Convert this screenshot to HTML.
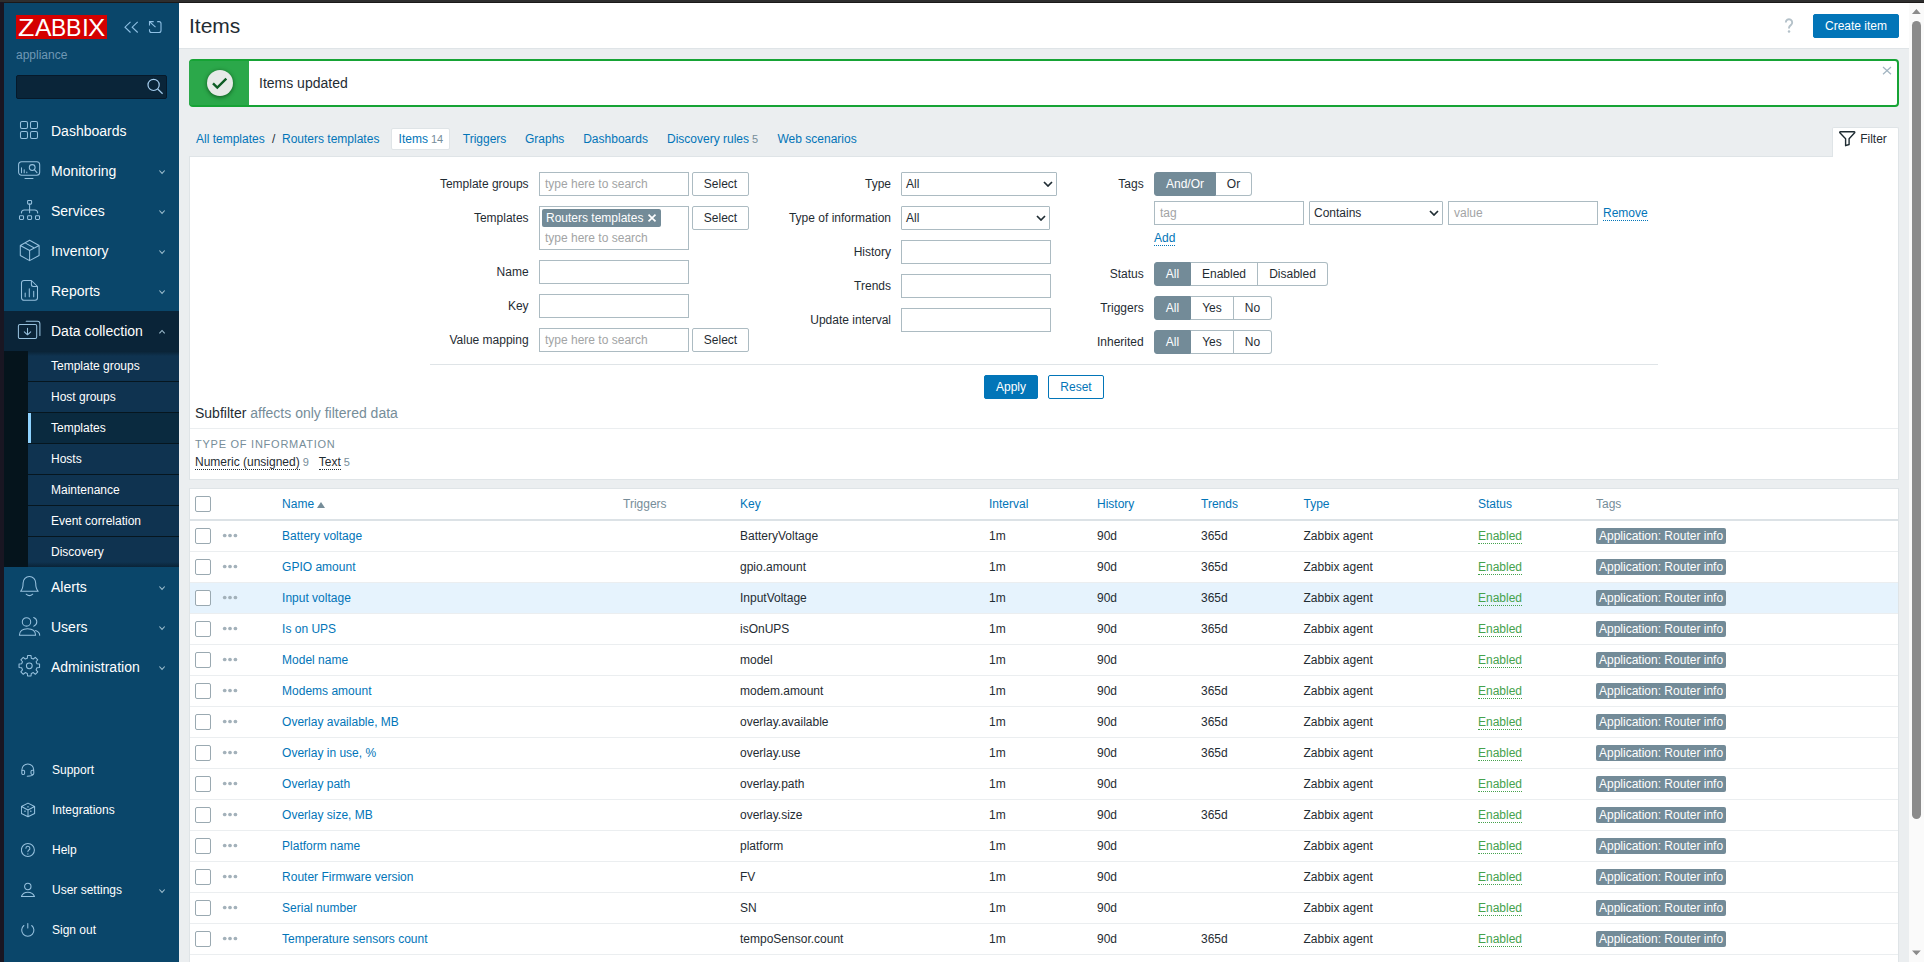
<!DOCTYPE html>
<html lang="en">
<head>
<meta charset="utf-8">
<title>Configuration of items</title>
<style>
*{box-sizing:border-box}
html,body{margin:0;padding:0}
body{width:1924px;height:962px;overflow:hidden;position:relative;background:#191622;font-family:"Liberation Sans",sans-serif;font-size:12px;line-height:17px;color:#1f2c33}
a{color:#0275b8;text-decoration:none}
#topbar{position:absolute;left:0;top:0;width:1924px;height:3px;background:#2e2e2e;border-bottom:1px solid #1b1919}
#leftbar{position:absolute;left:0;top:2px;width:4px;height:960px;background:#191622}
#vp{position:absolute;left:4px;top:3px;width:1920px;height:959px;overflow:hidden;background:#ebeef0}
.abs{position:absolute}
/* sidebar */
#side{position:absolute;left:0;top:0;width:175px;height:959px;background:#0a466a;color:#fff}
#logo{position:absolute;left:12px;top:12px;width:91px;height:24px;background:#d40000;color:#fff;font-size:24.800px;line-height:25.200px;overflow:hidden;white-space:nowrap}
#side .appl{position:absolute;left:12px;top:43.600px;font-size:12px;color:#6f98b5}
#search{position:absolute;left:12px;top:72px;width:151px;height:24px;background:#0a2539;border:1px solid #06192a;border-radius:2px}
.mm{position:absolute;left:0;width:175px;height:40px;font-size:14px;line-height:40px;color:#fff}
.mm span.t{position:absolute;left:47px;top:0}
.mm svg.ic{position:absolute;left:13px;top:8px}
.mm svg.ar{position:absolute;left:154px;top:18px}
.sm{position:absolute;left:24px;width:151px;height:31px;background:#0f3350;border-bottom:1px solid #06161f;font-size:12px;line-height:30px;color:#fff;padding-left:23px}
.um{position:absolute;left:0;width:175px;height:40px;font-size:12px;line-height:40px;color:#fff}
.um span.t{position:absolute;left:48px;top:0}
.um svg.ic{position:absolute;left:17px;top:12px}
/* main */
#hdr{position:absolute;left:175px;top:0;width:1730px;height:46px;background:#fff;border-bottom:1px solid #dfe4e7}
#hdr h1{position:absolute;left:10px;top:9px;margin:0;font-size:21px;line-height:28px;font-weight:normal;color:#1f2c33}
.btn{position:absolute;background:#0275b8;border:1px solid #0275b8;color:#fff;border-radius:2px;font-size:12px;text-align:center;height:24px;line-height:22px}
.btn-alt{background:#fff;color:#0275b8}
.btn-grey{background:#fff;color:#1f2c33;border:1px solid #acbbc2}
/* message */
#msg{position:absolute;left:185px;top:56px;width:1710px;height:48px;background:#fff;border:2px solid #16a335;border-radius:4px}
#msg .g{position:absolute;left:-2px;top:0;width:60px;height:44px;background:#2ba84a;border-radius:2px 0 0 2px}
#msg .c{position:absolute;left:18px;top:9px;width:26px;height:26px;border-radius:50%;background:#e7eae8;box-shadow:0 1px 4px rgba(0,50,10,.7)}
#msg .txt{position:absolute;left:68px;top:13px;font-size:14px;line-height:18px}
/* nav */
#nav{position:absolute;left:185px;top:123px;height:26px;font-size:12px;line-height:26px;white-space:nowrap}
#nav span,#nav a{position:absolute;top:0}
#nav sup,.cnt{color:#768d99}
/* filter */
#ftab{position:absolute;left:1828px;top:124px;width:67px;height:30px;background:#fff;border:1px solid #dfe4e7;border-bottom:none;border-radius:2px 2px 0 0;z-index:2}
#filt{position:absolute;left:185px;top:153px;width:1710px;height:324px;background:#fff;border:1px solid #dfe4e7}
.lbl{position:absolute;text-align:right;white-space:nowrap;line-height:24px;height:24px}
.inp{position:absolute;height:24px;background:#fff;border:1px solid #acbbc2;line-height:22px;padding:0 5px;color:#a2a4a5;white-space:nowrap}
.sel{color:#1f2c33;border-radius:1px}
.rad{position:absolute;height:24px;border:1px solid #acbbc2;background:#fff;line-height:22px;text-align:center;color:#1f2c33}
.rad.on{background:#738b98;border-color:#738b98;color:#fff}
.dot{border-bottom:1px dotted #0275b8}
/* table */
#tbl{position:absolute;left:185px;top:485px;width:1710px;height:480px;background:#fff;border:1px solid #dfe4e7}
.row{position:absolute;left:0;width:1708px;height:31px;border-bottom:1px solid #ebeef0;line-height:30px}
.row.hov{background:#e6f3fd}
.row span,.row a{position:absolute;top:0;white-space:nowrap}
.cb{position:absolute;left:6px;width:16px;height:16px;border:1px solid #9aa9b1;border-radius:2px;background:#fff}
.tag{background:#738b98;color:#fff;border-radius:2px;height:16px;line-height:16px;padding:0 3px;top:7px !important}
.en{color:#45a24d}
.en i{font-style:normal;border-bottom:1px dotted #45a24d;display:inline-block;line-height:14px}
.th{color:#0275b8}
.thg{color:#768d99}
/* scrollbar */
#sb{position:absolute;left:1905px;top:0;width:15px;height:959px;background:#fafafa}
#sb .thumb{position:absolute;left:3px;top:18px;width:9px;height:798px;background:#8b8b8b;border-radius:5px}
</style>
</head>
<body>
<div id="topbar"></div>
<div id="leftbar"></div>
<div id="vp">
<!--SIDE-->
<div id="side">
<div id="logo"><span class="abs" style="left:2.0px;top:0;transform-origin:0 0;transform:scaleX(1.08)">Z</span><span class="abs" style="left:19.1px;top:0;transform-origin:0 0;transform:scaleX(1)">A</span><span class="abs" style="left:35.0px;top:0;transform-origin:0 0;transform:scaleX(0.92)">B</span><span class="abs" style="left:50.0px;top:0;transform-origin:0 0;transform:scaleX(0.93)">B</span><span class="abs" style="left:66.0px;top:0;transform-origin:0 0;transform:scaleX(1)">I</span><span class="abs" style="left:71.6px;top:0;transform-origin:0 0;transform:scaleX(1.04)">X</span></div>
<svg class="abs" style="left:116px;top:13px" width="48" height="24" viewBox="0 0 48 24" fill="none" stroke="#8fc0e4" stroke-width="1.1"><path d="M10.500 5.900L5 11.200L10.500 16.500M17.700 5.900L12.200 11.200L17.700 16.500"/><path d="M37.200 5.600H39a2 2 0 0 1 2 2V14.500a2 2 0 0 1-2 2H31.500a2 2 0 0 1-2-2V13.200M35.500 11.200L29.500 5.600M29.500 9.500V5.600H33.700"/></svg>
<div class="appl">appliance</div>
<div id="search"><svg class="abs" style="left:126px;top:0" width="24" height="22" viewBox="0 0 24 22" fill="none" stroke="#a5cdee" stroke-width="1.200"><circle cx="10.600" cy="8.900" r="5.600"/><path d="M14.700 13L19.600 17.700"/></svg></div>
<!--MENU-->
<div class="mm" style="top:108px"><svg class="ic" width="25" height="24" viewBox="0 0 25 24" stroke="#97c1de" stroke-width="1.05" fill="none" stroke-linecap="round" stroke-linejoin="round"><rect x="3.5" y="2.5" width="7" height="7" rx="1.5"/><rect x="13.5" y="2.5" width="7" height="7" rx="1.5"/><rect x="3.5" y="12.5" width="7" height="7" rx="1.5"/><rect x="13.5" y="12.5" width="7" height="7" rx="1.5"/></svg><span class="t">Dashboards</span></div>
<div class="mm" style="top:148px"><svg class="ic" width="25" height="24" viewBox="0 0 25 24" stroke="#97c1de" stroke-width="1.05" fill="none" stroke-linecap="round" stroke-linejoin="round"><rect x="1.600" y="2.800" width="21.100" height="13.500" rx="3"/><path d="M8 19.500h8M4.500 8.700v5M7.200 10.700v3M9.800 12.900v.8"/><circle cx="15.200" cy="8.500" r="2.900"/><path d="M17.300 10.600l2.700 3"/></svg><span class="t">Monitoring</span><svg class="ar" width="8" height="6" viewBox="0 0 8 6"><path d="M1.400 1.500L4.050 4.400L6.700 1.500" stroke="#9dbccd" stroke-width="1.1" fill="none"/></svg></div>
<div class="mm" style="top:188px"><svg class="ic" width="25" height="24" viewBox="0 0 25 24" stroke="#97c1de" stroke-width="1.05" fill="none" stroke-linecap="round" stroke-linejoin="round"><rect x="10.600" y="1.400" width="4" height="3.700" rx=".8"/><rect x="2.500" y="16.700" width="4" height="3.700" rx=".8"/><rect x="10.600" y="16.700" width="4" height="3.700" rx=".8"/><rect x="18.500" y="16.700" width="4" height="3.700" rx=".8"/><path d="M12.600 5.100v8.600M4.400 14a3 3 0 0 1 3-3H17.700a3 3 0 0 1 3 3"/></svg><span class="t">Services</span><svg class="ar" width="8" height="6" viewBox="0 0 8 6"><path d="M1.400 1.500L4.050 4.400L6.700 1.500" stroke="#9dbccd" stroke-width="1.1" fill="none"/></svg></div>
<div class="mm" style="top:228px"><svg class="ic" width="25" height="24" viewBox="0 0 25 24" stroke="#97c1de" stroke-width="1.05" fill="none" stroke-linecap="round" stroke-linejoin="round"><path d="M12.600 1.300L22.100 6.500V16.500L12.600 21.600L3.300 16.500V6.500zM3.300 6.500L12.600 11.500L22.100 6.500M12.600 11.500V21.600M8 3.900L17.350 9"/></svg><span class="t">Inventory</span><svg class="ar" width="8" height="6" viewBox="0 0 8 6"><path d="M1.400 1.500L4.050 4.400L6.700 1.500" stroke="#9dbccd" stroke-width="1.1" fill="none"/></svg></div>
<div class="mm" style="top:268px"><svg class="ic" width="25" height="24" viewBox="0 0 25 24" stroke="#97c1de" stroke-width="1.05" fill="none" stroke-linecap="round" stroke-linejoin="round"><path d="M7 1.500H14.400L20.500 7.500V18.800a2.500 2.500 0 0 1-2.500 2.500H7a2.500 2.500 0 0 1-2.500-2.500V4a2.500 2.500 0 0 1 2.500-2.500zM14.400 1.500V5.500a2 2 0 0 0 2 2H20.500M8.200 14.100v3.700M12.300 9.700v8.100M16.700 12.200v5.600"/></svg><span class="t">Reports</span><svg class="ar" width="8" height="6" viewBox="0 0 8 6"><path d="M1.400 1.500L4.050 4.400L6.700 1.500" stroke="#9dbccd" stroke-width="1.1" fill="none"/></svg></div>
<div class="mm" style="top:308px;background:#0a2438"><svg class="ic" width="25" height="24" viewBox="0 0 25 24" stroke="#97c1de" stroke-width="1.05" fill="none" stroke-linecap="round" stroke-linejoin="round"><rect x="1.400" y="5.500" width="18.300" height="14" rx="1.500"/><path d="M9.200 2.300H20.400a2.500 2.500 0 0 1 2.500 2.500V16.500M10.500 9.300V15.500M7.300 12.800L10.500 15.800L13.700 12.800"/></svg><span class="t">Data collection</span><svg class="ar" width="8" height="6" viewBox="0 0 8 6"><path d="M1.400 4.400L4.050 1.500L6.700 4.400" stroke="#9dbccd" stroke-width="1.1" fill="none"/></svg></div>
<div class="mm" style="top:564px"><svg class="ic" width="25" height="24" viewBox="0 0 25 24" stroke="#97c1de" stroke-width="1.05" fill="none" stroke-linecap="round" stroke-linejoin="round"><path d="M3.600 16.300H21.200C19.300 14.300 18.700 12 18.700 8A6.300 6.600 0 0 0 6.100 8C6.100 12 5.500 14.300 3.600 16.300zM9.200 19.200q3.250 2.800 6.500 0"/></svg><span class="t">Alerts</span><svg class="ar" width="8" height="6" viewBox="0 0 8 6"><path d="M1.400 1.500L4.050 4.400L6.700 1.500" stroke="#9dbccd" stroke-width="1.1" fill="none"/></svg></div>
<div class="mm" style="top:604px"><svg class="ic" width="25" height="24" viewBox="0 0 25 24" stroke="#97c1de" stroke-width="1.05" fill="none" stroke-linecap="round" stroke-linejoin="round"><circle cx="9.500" cy="6.900" r="4.200"/><path d="M2.400 20.300C2.400 16 5.500 13.700 10.500 13.700S18.600 16 18.600 20.300zM16.700 2.500A4.600 4.600 0 0 1 16.700 11.200M18.600 15.600C21 16.500 22.700 18 22.700 20.300"/></svg><span class="t">Users</span><svg class="ar" width="8" height="6" viewBox="0 0 8 6"><path d="M1.400 1.500L4.050 4.400L6.700 1.500" stroke="#9dbccd" stroke-width="1.1" fill="none"/></svg></div>
<div class="mm" style="top:644px"><svg class="ic" width="25" height="24" viewBox="0 0 25 24" stroke="#97c1de" stroke-width="1.05" fill="none" stroke-linecap="round" stroke-linejoin="round"><circle cx="12.300" cy="10.800" r="2.900"/><path d="M10.32 3.15 L10.58 0.54 L14.02 0.54 L14.28 3.15 L16.31 3.99 L18.34 2.33 L20.77 4.76 L19.11 6.79 L19.95 8.82 L22.56 9.08 L22.56 12.52 L19.95 12.78 L19.11 14.81 L20.77 16.84 L18.34 19.27 L16.31 17.61 L14.28 18.45 L14.02 21.06 L10.58 21.06 L10.32 18.45 L8.29 17.61 L6.26 19.27 L3.83 16.84 L5.49 14.81 L4.65 12.78 L2.04 12.52 L2.04 9.08 L4.65 8.82 L5.49 6.79 L3.83 4.76 L6.26 2.33 L8.29 3.99Z"/></svg><span class="t">Administration</span><svg class="ar" width="8" height="6" viewBox="0 0 8 6"><path d="M1.400 1.500L4.050 4.400L6.700 1.500" stroke="#9dbccd" stroke-width="1.1" fill="none"/></svg></div>
<div class="abs" style="left:0;top:348px;width:24px;height:216px;background:#05141c"></div>
<div class="sm" style="top:348px">Template groups</div>
<div class="sm" style="top:379px">Host groups</div>
<div class="sm" style="top:410px;background:#0a2a3f"><i class="abs" style="left:0;top:0;width:3px;height:30px;background:#8fd3ff"></i>Templates</div>
<div class="sm" style="top:441px">Hosts</div>
<div class="sm" style="top:472px">Maintenance</div>
<div class="sm" style="top:503px">Event correlation</div>
<div class="sm" style="top:534px;height:30px;border-bottom:none">Discovery</div>
<div class="abs" style="left:0;top:348px;width:175px;height:5px;background:linear-gradient(rgba(5,20,30,.55),rgba(5,20,30,0))"></div>
<div class="abs" style="left:0;top:559px;width:175px;height:5px;background:linear-gradient(rgba(5,20,30,0),rgba(5,20,30,.5))"></div>
<div class="um" style="top:747px"><svg class="ic" width="16" height="16" viewBox="0 0 16 16" stroke="#97c1de" stroke-width="1.05" fill="none" stroke-linecap="round" stroke-linejoin="round"><path d="M0.900 8.500V7.900A5.900 5.900 0 0 1 12.700 7.900V8.500M12.200 12.500C12 13.800 10 14 6.200 14.300"/><rect x=".8" y="8.200" width="2.800" height="4.200" rx="1.200"/><rect x="10" y="8.200" width="2.800" height="4.200" rx="1.200"/></svg><span class="t">Support</span></div>
<div class="um" style="top:787px"><svg class="ic" width="16" height="16" viewBox="0 0 16 16" stroke="#97c1de" stroke-width="1.05" fill="none" stroke-linecap="round" stroke-linejoin="round"><path d="M7 1.100L13.600 4.500V11.500L7 14.800L.4 11.500V4.500zM.4 4.500L7 8L13.600 4.500M7 8V14.800"/><path d="M7 4.600v.4M3.800 9.200h.4M9.600 9.200h.4" stroke-width="1.300"/></svg><span class="t">Integrations</span></div>
<div class="um" style="top:827px"><svg class="ic" width="16" height="16" viewBox="0 0 16 16" stroke="#97c1de" stroke-width="1.05" fill="none" stroke-linecap="round" stroke-linejoin="round"><circle cx="6.900" cy="8" r="6.500"/><path d="M4.900 6.300a2 2 0 1 1 3 1.700c-.7.400-1 .8-1 1.600M6.900 11.800v.3"/></svg><span class="t">Help</span></div>
<div class="um" style="top:867px"><svg class="ic" width="16" height="16" viewBox="0 0 16 16" stroke="#97c1de" stroke-width="1.05" fill="none" stroke-linecap="round" stroke-linejoin="round"><circle cx="6.800" cy="4.500" r="3.200"/><path d="M.4 14.500C1.500 11.500 4 10.200 6.800 10.200S12.300 11.500 13.500 14.500z"/></svg><span class="t">User settings</span><svg class="ar" style="position:absolute;left:154px;top:18px" width="8" height="6" viewBox="0 0 8 6"><path d="M1.400 1.500L4.050 4.400L6.700 1.500" stroke="#9dbccd" stroke-width="1.100" fill="none"/></svg></div>
<div class="um" style="top:907px"><svg class="ic" width="16" height="16" viewBox="0 0 16 16" stroke="#97c1de" stroke-width="1.05" fill="none" stroke-linecap="round" stroke-linejoin="round"><path d="M6.800 1.600V6M2.900 3.500A6.100 6.100 0 1 0 10.700 3.500"/></svg><span class="t">Sign out</span></div>
<!--/MENU-->
</div>
<!--HDR-->
<div id="hdr"><h1>Items</h1>
<svg class="abs" style="left:1600px;top:12px" width="20" height="20" viewBox="0 0 20 20" fill="none" stroke="#b4c1c9" stroke-width="1.900"><path d="M6.800 7.400a3.200 3.200 0 1 1 5 2.700c-1.300.9-1.800 1.500-1.800 3v.5"/><circle cx="10" cy="16.600" r="1.250" fill="#b4c1c9" stroke="none"/></svg>
<div class="btn" style="left:1634px;top:11px;width:86px">Create item</div>
</div>
<!--MSG-->
<div id="msg"><div class="g"><div class="c"><svg class="abs" style="left:0;top:0" width="26" height="26" viewBox="0 0 26 26"><path d="M6 13.300L10.300 17.600L19.300 8.700" fill="none" stroke="#0e5c24" stroke-width="2.400"/></svg></div></div><div class="txt">Items updated</div><svg class="abs" style="left:1691px;top:5px" width="10" height="10" viewBox="0 0 10 10"><path d="M1 1L9 8.300M9 1L1 8.300" stroke="#a3b5c2" stroke-width="1.200" fill="none"/></svg></div>
<!--NAV-->
<div id="nav"><a style="left:7px">All templates</a><span style="left:83px;color:#1f2c33">/</span><a style="left:93px">Routers templates</a><div class="abs" style="left:202px;top:2px;width:59px;height:22px;background:#fff;border:1px solid #dfe4e7;border-radius:2px"></div><a style="left:209.6px">Items<span class="cnt" style="position:static;font-size:11px;margin-left:3px">14</span></a><a style="left:273.8px">Triggers</a><a style="left:336px">Graphs</a><a style="left:394.2px">Dashboards</a><a style="left:478px">Discovery rules<span class="cnt" style="position:static;font-size:11px;margin-left:3px">5</span></a><a style="left:588.5px">Web scenarios</a></div>
<div id="ftab"><svg class="abs" style="left:0;top:0" width="28" height="22" viewBox="0 0 28 22"><path d="M7.300 3.800H21.200a.6.6 0 0 1 .45 1L16.100 10.700V16.500L12.600 17.700V10.700L6.850 4.800a.6.6 0 0 1 .45-1z" fill="none" stroke="#1f2c33" stroke-width="1.400" stroke-linejoin="round"/></svg><span class="abs" style="left:27.200px;top:2px;line-height:18px;color:#1f2c33">Filter</span></div>
<!--/NAV-->
<!--FILT-->
<div id="filt"><div class="lbl" style="right:1369.4px;top:15px">Template groups</div>
<div class="inp " style="left:349px;top:15px;width:150px;height:24px">type here to search</div>
<div class="btn btn-grey" style="left:502px;top:15px;width:57px">Select</div>
<div class="lbl" style="right:1369.4px;top:49px">Templates</div>
<div class="inp " style="left:349px;top:49px;width:150px;height:44px"></div>
<div class="btn btn-grey" style="left:502px;top:49px;width:57px">Select</div>
<div class="abs" style="left:352px;top:52px;width:119px;height:18px;background:#738b98;border-radius:2px;color:#fff;line-height:18px;padding-left:4px;white-space:nowrap">Routers templates<svg class="abs" style="right:4px;top:4px" width="10" height="10" viewBox="0 0 10 10"><path d="M1.500 1.700L8.500 8.300M8.500 1.700L1.500 8.300" stroke="#fff" stroke-width="1.700"/></svg></div>
<div class="abs" style="left:355px;top:72px;line-height:18px;color:#a2a4a5">type here to search</div>
<div class="lbl" style="right:1369.4px;top:103px">Name</div>
<div class="inp " style="left:349px;top:103px;width:150px;height:24px"></div>
<div class="lbl" style="right:1369.4px;top:137px">Key</div>
<div class="inp " style="left:349px;top:137px;width:150px;height:24px"></div>
<div class="lbl" style="right:1369.4px;top:171px">Value mapping</div>
<div class="inp " style="left:349px;top:171px;width:150px;height:24px">type here to search</div>
<div class="btn btn-grey" style="left:502px;top:171px;width:57px">Select</div>
<div class="lbl" style="right:1007px;top:15px">Type</div>
<div class="inp sel" style="left:711px;top:15px;width:156px;padding-left:4px">All<svg class="abs" style="right:3.500px;top:7.500px" width="10" height="6" viewBox="0 0 10 6"><path d="M1 1l4 4l4-4" fill="none" stroke="#1f2c33" stroke-width="1.7"/></svg></div>
<div class="lbl" style="right:1007px;top:49px">Type of information</div>
<div class="inp sel" style="left:711px;top:49px;width:149px;padding-left:4px">All<svg class="abs" style="right:3.500px;top:7.500px" width="10" height="6" viewBox="0 0 10 6"><path d="M1 1l4 4l4-4" fill="none" stroke="#1f2c33" stroke-width="1.7"/></svg></div>
<div class="lbl" style="right:1007px;top:83px">History</div>
<div class="inp " style="left:711px;top:83px;width:150px;height:24px"></div>
<div class="lbl" style="right:1007px;top:117px">Trends</div>
<div class="inp " style="left:711px;top:117px;width:150px;height:24px"></div>
<div class="lbl" style="right:1007px;top:151px">Update interval</div>
<div class="inp " style="left:711px;top:151px;width:150px;height:24px"></div>
<div class="lbl" style="right:754.3px;top:15px">Tags</div>
<div class="rad on" style="left:964px;top:15px;width:62px;border-radius:3px 0 0 3px;">And/Or</div>
<div class="rad" style="left:1026px;top:15px;width:36px;border-radius:0 3px 3px 0;border-left:none;">Or</div>
<div class="inp " style="left:964px;top:44px;width:150px;height:24px">tag</div>
<div class="inp sel" style="left:1119px;top:44px;width:134px;padding-left:4px">Contains<svg class="abs" style="right:3.500px;top:7.500px" width="10" height="6" viewBox="0 0 10 6"><path d="M1 1l4 4l4-4" fill="none" stroke="#1f2c33" stroke-width="1.7"/></svg></div>
<div class="inp " style="left:1258px;top:44px;width:150px;height:24px">value</div>
<a class="abs" style="left:1413px;top:49px;line-height:14px;border-bottom:1px dotted #0275b8">Remove</a>
<a class="abs" style="left:964px;top:74px;line-height:14px;border-bottom:1px dotted #0275b8">Add</a>
<div class="lbl" style="right:754.3px;top:105px">Status</div>
<div class="rad on" style="left:964px;top:105px;width:37px;border-radius:3px 0 0 3px;">All</div>
<div class="rad" style="left:1001px;top:105px;width:67px;border-left:none;">Enabled</div>
<div class="rad" style="left:1068px;top:105px;width:70px;border-radius:0 3px 3px 0;border-left:none;">Disabled</div>
<div class="lbl" style="right:754.3px;top:139px">Triggers</div>
<div class="rad on" style="left:964px;top:139px;width:37px;border-radius:3px 0 0 3px;">All</div>
<div class="rad" style="left:1001px;top:139px;width:43px;border-left:none;">Yes</div>
<div class="rad" style="left:1044px;top:139px;width:38px;border-radius:0 3px 3px 0;border-left:none;">No</div>
<div class="lbl" style="right:754.3px;top:173px">Inherited</div>
<div class="rad on" style="left:964px;top:173px;width:37px;border-radius:3px 0 0 3px;">All</div>
<div class="rad" style="left:1001px;top:173px;width:43px;border-left:none;">Yes</div>
<div class="rad" style="left:1044px;top:173px;width:38px;border-radius:0 3px 3px 0;border-left:none;">No</div>
<div class="abs" style="left:240px;top:207px;width:1228px;height:1px;background:#dfe4e7"></div>
<div class="btn " style="left:794px;top:218px;width:54px">Apply</div>
<div class="btn btn-alt" style="left:858px;top:218px;width:56px">Reset</div>
<div class="abs" style="left:5px;top:246px;font-size:14px;line-height:20px;color:#1f2c33;white-space:nowrap">Subfilter <span style="color:#768d99">affects only filtered data</span></div>
<div class="abs" style="left:0;top:271px;width:1708px;height:1px;background:#ebeef0"></div>
<div class="abs" style="left:5px;top:279px;font-size:11px;line-height:16px;color:#768d99;letter-spacing:.75px;white-space:nowrap">TYPE OF INFORMATION</div>
<div class="abs" style="left:5px;top:298px;line-height:14px;white-space:nowrap"><span style="border-bottom:1px dotted #1f2c33;display:inline-block">Numeric (unsigned)</span><span class="cnt" style="font-size:11px;margin-left:3px">9</span><span style="border-bottom:1px dotted #1f2c33;display:inline-block;margin-left:10px">Text</span><span class="cnt" style="font-size:11px;margin-left:3px">5</span></div></div>
<!--/FILT-->
<!--TBL-->
<div id="tbl"><div class="row" style="top:0;height:32px;border-bottom:2px solid #dce2e6"><div class="cb" style="left:5px;top:7px"></div><a class="th" style="left:92.1px">Name<svg style="position:absolute;left:35px;top:13px" width="8" height="6" viewBox="0 0 8 6"><path d="M0 6l4-6l4 6z" fill="#768d99"/></svg></a><span class="thg" style="left:433px">Triggers</span><a class="th" style="left:550px">Key</a><a class="th" style="left:799px">Interval</a><a class="th" style="left:907px">History</a><a class="th" style="left:1011px">Trends</a><a class="th" style="left:1113.5px">Type</a><a class="th" style="left:1288px">Status</a><span class="thg" style="left:1406px">Tags</span></div>
<div class="row" style="top:32px"><div class="cb" style="left:5px;top:7px"></div><svg class="abs" style="left:32px;top:12px" width="16" height="6" viewBox="0 0 16 6"><circle cx="2.700" cy="2.500" r="1.850" fill="#a3b1ba"/><circle cx="8" cy="2.500" r="1.850" fill="#a3b1ba"/><circle cx="13.400" cy="2.500" r="1.850" fill="#a3b1ba"/></svg><a style="left:92.1px">Battery voltage</a><span style="left:550px">BatteryVoltage</span><span style="left:799px">1m</span><span style="left:907px">90d</span><span style="left:1011px">365d</span><span style="left:1113.5px">Zabbix agent</span><span class="en" style="left:1288px"><i>Enabled</i></span><span class="tag" style="left:1406px">Application: Router info</span></div>
<div class="row" style="top:63px"><div class="cb" style="left:5px;top:7px"></div><svg class="abs" style="left:32px;top:12px" width="16" height="6" viewBox="0 0 16 6"><circle cx="2.700" cy="2.500" r="1.850" fill="#a3b1ba"/><circle cx="8" cy="2.500" r="1.850" fill="#a3b1ba"/><circle cx="13.400" cy="2.500" r="1.850" fill="#a3b1ba"/></svg><a style="left:92.1px">GPIO amount</a><span style="left:550px">gpio.amount</span><span style="left:799px">1m</span><span style="left:907px">90d</span><span style="left:1011px">365d</span><span style="left:1113.5px">Zabbix agent</span><span class="en" style="left:1288px"><i>Enabled</i></span><span class="tag" style="left:1406px">Application: Router info</span></div>
<div class="row hov" style="top:94px"><div class="cb" style="left:5px;top:7px"></div><svg class="abs" style="left:32px;top:12px" width="16" height="6" viewBox="0 0 16 6"><circle cx="2.700" cy="2.500" r="1.850" fill="#a3b1ba"/><circle cx="8" cy="2.500" r="1.850" fill="#a3b1ba"/><circle cx="13.400" cy="2.500" r="1.850" fill="#a3b1ba"/></svg><a style="left:92.1px">Input voltage</a><span style="left:550px">InputVoltage</span><span style="left:799px">1m</span><span style="left:907px">90d</span><span style="left:1011px">365d</span><span style="left:1113.5px">Zabbix agent</span><span class="en" style="left:1288px"><i>Enabled</i></span><span class="tag" style="left:1406px">Application: Router info</span></div>
<div class="row" style="top:125px"><div class="cb" style="left:5px;top:7px"></div><svg class="abs" style="left:32px;top:12px" width="16" height="6" viewBox="0 0 16 6"><circle cx="2.700" cy="2.500" r="1.850" fill="#a3b1ba"/><circle cx="8" cy="2.500" r="1.850" fill="#a3b1ba"/><circle cx="13.400" cy="2.500" r="1.850" fill="#a3b1ba"/></svg><a style="left:92.1px">Is on UPS</a><span style="left:550px">isOnUPS</span><span style="left:799px">1m</span><span style="left:907px">90d</span><span style="left:1011px">365d</span><span style="left:1113.5px">Zabbix agent</span><span class="en" style="left:1288px"><i>Enabled</i></span><span class="tag" style="left:1406px">Application: Router info</span></div>
<div class="row" style="top:156px"><div class="cb" style="left:5px;top:7px"></div><svg class="abs" style="left:32px;top:12px" width="16" height="6" viewBox="0 0 16 6"><circle cx="2.700" cy="2.500" r="1.850" fill="#a3b1ba"/><circle cx="8" cy="2.500" r="1.850" fill="#a3b1ba"/><circle cx="13.400" cy="2.500" r="1.850" fill="#a3b1ba"/></svg><a style="left:92.1px">Model name</a><span style="left:550px">model</span><span style="left:799px">1m</span><span style="left:907px">90d</span><span style="left:1113.5px">Zabbix agent</span><span class="en" style="left:1288px"><i>Enabled</i></span><span class="tag" style="left:1406px">Application: Router info</span></div>
<div class="row" style="top:187px"><div class="cb" style="left:5px;top:7px"></div><svg class="abs" style="left:32px;top:12px" width="16" height="6" viewBox="0 0 16 6"><circle cx="2.700" cy="2.500" r="1.850" fill="#a3b1ba"/><circle cx="8" cy="2.500" r="1.850" fill="#a3b1ba"/><circle cx="13.400" cy="2.500" r="1.850" fill="#a3b1ba"/></svg><a style="left:92.1px">Modems amount</a><span style="left:550px">modem.amount</span><span style="left:799px">1m</span><span style="left:907px">90d</span><span style="left:1011px">365d</span><span style="left:1113.5px">Zabbix agent</span><span class="en" style="left:1288px"><i>Enabled</i></span><span class="tag" style="left:1406px">Application: Router info</span></div>
<div class="row" style="top:218px"><div class="cb" style="left:5px;top:7px"></div><svg class="abs" style="left:32px;top:12px" width="16" height="6" viewBox="0 0 16 6"><circle cx="2.700" cy="2.500" r="1.850" fill="#a3b1ba"/><circle cx="8" cy="2.500" r="1.850" fill="#a3b1ba"/><circle cx="13.400" cy="2.500" r="1.850" fill="#a3b1ba"/></svg><a style="left:92.1px">Overlay available, MB</a><span style="left:550px">overlay.available</span><span style="left:799px">1m</span><span style="left:907px">90d</span><span style="left:1011px">365d</span><span style="left:1113.5px">Zabbix agent</span><span class="en" style="left:1288px"><i>Enabled</i></span><span class="tag" style="left:1406px">Application: Router info</span></div>
<div class="row" style="top:249px"><div class="cb" style="left:5px;top:7px"></div><svg class="abs" style="left:32px;top:12px" width="16" height="6" viewBox="0 0 16 6"><circle cx="2.700" cy="2.500" r="1.850" fill="#a3b1ba"/><circle cx="8" cy="2.500" r="1.850" fill="#a3b1ba"/><circle cx="13.400" cy="2.500" r="1.850" fill="#a3b1ba"/></svg><a style="left:92.1px">Overlay in use, %</a><span style="left:550px">overlay.use</span><span style="left:799px">1m</span><span style="left:907px">90d</span><span style="left:1011px">365d</span><span style="left:1113.5px">Zabbix agent</span><span class="en" style="left:1288px"><i>Enabled</i></span><span class="tag" style="left:1406px">Application: Router info</span></div>
<div class="row" style="top:280px"><div class="cb" style="left:5px;top:7px"></div><svg class="abs" style="left:32px;top:12px" width="16" height="6" viewBox="0 0 16 6"><circle cx="2.700" cy="2.500" r="1.850" fill="#a3b1ba"/><circle cx="8" cy="2.500" r="1.850" fill="#a3b1ba"/><circle cx="13.400" cy="2.500" r="1.850" fill="#a3b1ba"/></svg><a style="left:92.1px">Overlay path</a><span style="left:550px">overlay.path</span><span style="left:799px">1m</span><span style="left:907px">90d</span><span style="left:1113.5px">Zabbix agent</span><span class="en" style="left:1288px"><i>Enabled</i></span><span class="tag" style="left:1406px">Application: Router info</span></div>
<div class="row" style="top:311px"><div class="cb" style="left:5px;top:7px"></div><svg class="abs" style="left:32px;top:12px" width="16" height="6" viewBox="0 0 16 6"><circle cx="2.700" cy="2.500" r="1.850" fill="#a3b1ba"/><circle cx="8" cy="2.500" r="1.850" fill="#a3b1ba"/><circle cx="13.400" cy="2.500" r="1.850" fill="#a3b1ba"/></svg><a style="left:92.1px">Overlay size, MB</a><span style="left:550px">overlay.size</span><span style="left:799px">1m</span><span style="left:907px">90d</span><span style="left:1011px">365d</span><span style="left:1113.5px">Zabbix agent</span><span class="en" style="left:1288px"><i>Enabled</i></span><span class="tag" style="left:1406px">Application: Router info</span></div>
<div class="row" style="top:342px"><div class="cb" style="left:5px;top:7px"></div><svg class="abs" style="left:32px;top:12px" width="16" height="6" viewBox="0 0 16 6"><circle cx="2.700" cy="2.500" r="1.850" fill="#a3b1ba"/><circle cx="8" cy="2.500" r="1.850" fill="#a3b1ba"/><circle cx="13.400" cy="2.500" r="1.850" fill="#a3b1ba"/></svg><a style="left:92.1px">Platform name</a><span style="left:550px">platform</span><span style="left:799px">1m</span><span style="left:907px">90d</span><span style="left:1113.5px">Zabbix agent</span><span class="en" style="left:1288px"><i>Enabled</i></span><span class="tag" style="left:1406px">Application: Router info</span></div>
<div class="row" style="top:373px"><div class="cb" style="left:5px;top:7px"></div><svg class="abs" style="left:32px;top:12px" width="16" height="6" viewBox="0 0 16 6"><circle cx="2.700" cy="2.500" r="1.850" fill="#a3b1ba"/><circle cx="8" cy="2.500" r="1.850" fill="#a3b1ba"/><circle cx="13.400" cy="2.500" r="1.850" fill="#a3b1ba"/></svg><a style="left:92.1px">Router Firmware version</a><span style="left:550px">FV</span><span style="left:799px">1m</span><span style="left:907px">90d</span><span style="left:1113.5px">Zabbix agent</span><span class="en" style="left:1288px"><i>Enabled</i></span><span class="tag" style="left:1406px">Application: Router info</span></div>
<div class="row" style="top:404px"><div class="cb" style="left:5px;top:7px"></div><svg class="abs" style="left:32px;top:12px" width="16" height="6" viewBox="0 0 16 6"><circle cx="2.700" cy="2.500" r="1.850" fill="#a3b1ba"/><circle cx="8" cy="2.500" r="1.850" fill="#a3b1ba"/><circle cx="13.400" cy="2.500" r="1.850" fill="#a3b1ba"/></svg><a style="left:92.1px">Serial number</a><span style="left:550px">SN</span><span style="left:799px">1m</span><span style="left:907px">90d</span><span style="left:1113.5px">Zabbix agent</span><span class="en" style="left:1288px"><i>Enabled</i></span><span class="tag" style="left:1406px">Application: Router info</span></div>
<div class="row" style="top:435px"><div class="cb" style="left:5px;top:7px"></div><svg class="abs" style="left:32px;top:12px" width="16" height="6" viewBox="0 0 16 6"><circle cx="2.700" cy="2.500" r="1.850" fill="#a3b1ba"/><circle cx="8" cy="2.500" r="1.850" fill="#a3b1ba"/><circle cx="13.400" cy="2.500" r="1.850" fill="#a3b1ba"/></svg><a style="left:92.1px">Temperature sensors count</a><span style="left:550px">tempoSensor.count</span><span style="left:799px">1m</span><span style="left:907px">90d</span><span style="left:1011px">365d</span><span style="left:1113.5px">Zabbix agent</span><span class="en" style="left:1288px"><i>Enabled</i></span><span class="tag" style="left:1406px">Application: Router info</span></div>
<div class="row" style="top:466px"></div></div>
<!--/TBL-->
<!--SB-->
<div id="sb"><div class="thumb"></div><svg class="abs" style="left:0;top:0" width="15" height="959" viewBox="0 0 15 959"><path d="M3 11H11.800L7.400 6zM3 947.500H11.800L7.400 952.300z" fill="#8b8b8b"/></svg></div>
</div>
</body>
</html>
